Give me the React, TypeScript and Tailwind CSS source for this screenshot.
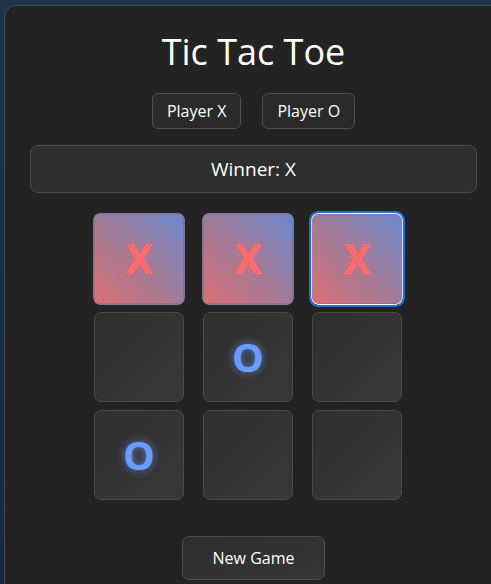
import React from "react";

type Mark = "X" | "O" | null;

const board: Mark[] = ["X", "X", "X", null, "O", null, "O", null, null];
const winLine = [0, 1, 2];

const Cell = ({ value, win, focused }: { value: Mark; win: boolean; focused?: boolean }) => {
  const base =
    "flex h-[90px] w-[90px] items-center justify-center rounded-[7px] border text-[40px] font-bold leading-none";
  const look = win
    ? "scale-[1.02] border-[#8a7a9a] bg-linear-to-tr from-[#dc6e74] via-[#a07b98] to-[#6a88cf]"
    : "border-[#4b4b4b] bg-linear-to-br from-[#2f2f2f] to-[#383838]";
  const ring = focused ? "outline-2 outline-offset-0 outline-[#1f6fdc] border-white" : "";
  return (
    <button className={`${base} ${look} ${ring}`}>
      {value === "X" && (
        <span className="text-[#ff6b6b] [text-shadow:0_0_8px_rgba(255,107,107,0.5)]">X</span>
      )}
      {value === "O" && (
        <span className="text-[#6c9cff] [text-shadow:0_0_8px_rgba(108,156,255,0.7)]">O</span>
      )}
    </button>
  );
};

export default function App() {
  return (
    <div
      className="h-[584px] w-[491px] overflow-hidden bg-linear-to-b from-[#1d3349] to-[#182a3a] pl-[4px] pt-[5px]"
      style={{ fontFamily: '"Open Sans", "Noto Sans", sans-serif' }}
    >
      <div className="flex h-[640px] w-[499px] flex-col items-center rounded-[12px] border border-[#464a4e] bg-[#232323] px-[25px] pt-[24px] text-white">
        <h1 className="text-[36px] leading-[43px] font-normal">Tic Tac Toe</h1>

        <div className="mt-[20px] flex gap-[21px]">
          <button className="h-[36px] rounded-[6px] border border-[#4f4f4f] bg-[#2a2a2a] px-[14px] text-[16px]">
            Player X
          </button>
          <button className="h-[36px] rounded-[6px] border border-[#4f4f4f] bg-[#2a2a2a] px-[14px] text-[16px]">
            Player O
          </button>
        </div>

        <div className="mt-[16px] flex h-[48px] w-full items-center justify-center rounded-[8px] border border-[#4a4a4a] bg-[#2e2e2e] text-[19px]">
          Winner: X
        </div>

        <div className="mt-[21px] mr-[11px] grid grid-cols-3 gap-x-[19px] gap-y-[8px]">
          {board.map((v, i) => (
            <Cell key={i} value={v} win={winLine.includes(i)} focused={i === 2} />
          ))}
        </div>

        <button className="mt-[36px] h-[44px] rounded-[7px] border border-[#4f4f4f] bg-linear-to-br from-[#2e2e2e] to-[#363636] px-[30px] text-[16px] font-medium">
          New Game
        </button>
      </div>
    </div>
  );
}
